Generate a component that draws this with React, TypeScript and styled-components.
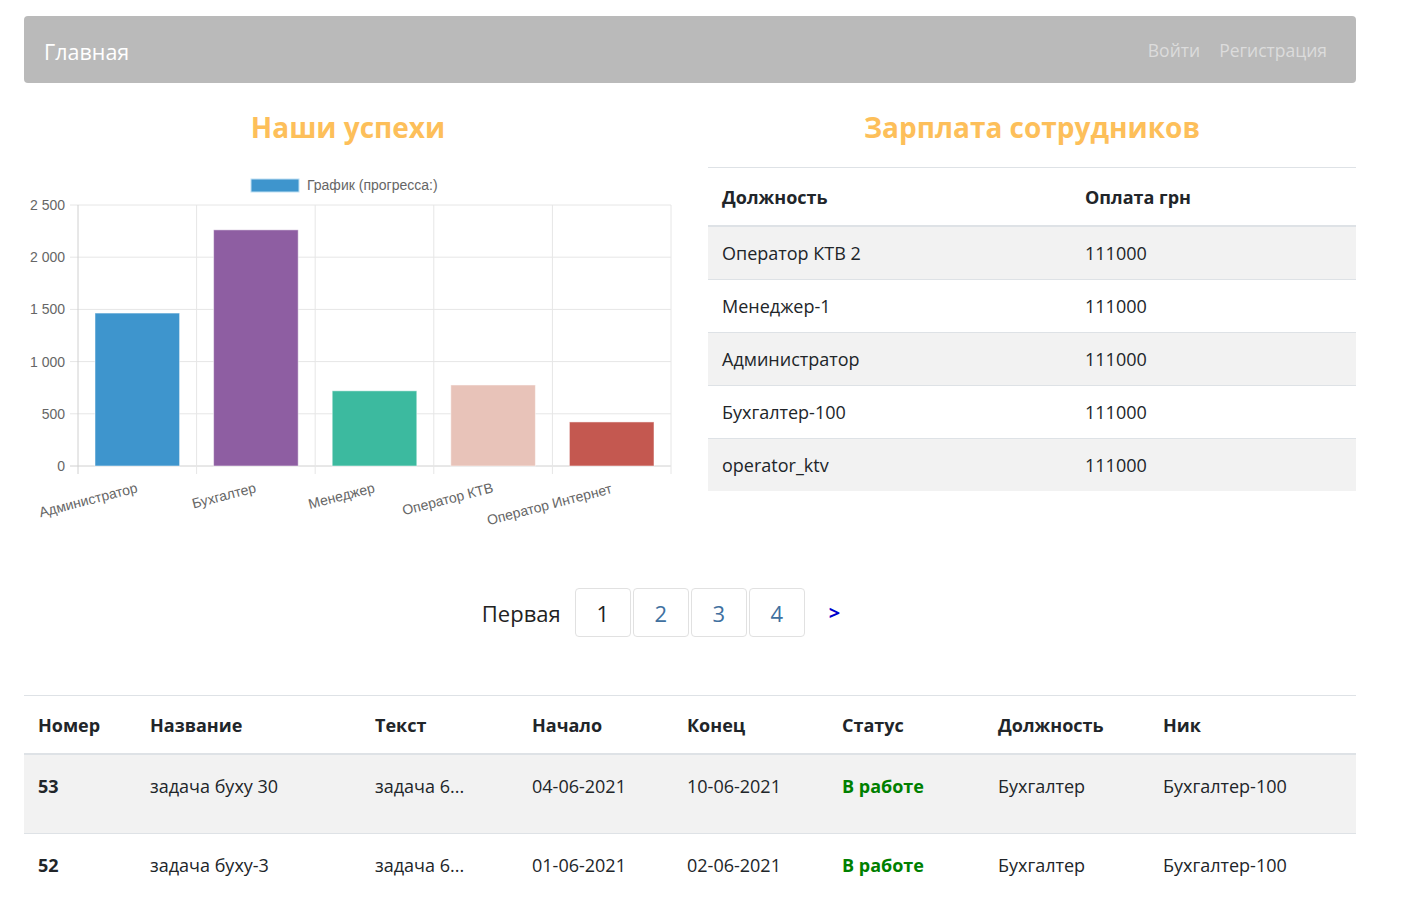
import React from "react";
import styled, { createGlobalStyle } from "styled-components";

const Global = createGlobalStyle`
  html, body { margin: 0; padding: 0; background: #fff; }
  body { font-family: "Open Sans", "Noto Sans", sans-serif; color: #212529; }
  * { box-sizing: border-box; }
`;

const Page = styled.div`
  width: 1332px;
  margin: 16px 0 0 24px;
`;

const Navbar = styled.nav`
  height: 67px;
  background: #bababa;
  border-radius: 4px;
  display: flex;
  align-items: center;
  justify-content: space-between;
  padding: 0 29px 0 20px;
`;

const Brand = styled.a`
  color: #fff;
  font-size: 21.5px;
  line-height: 30px;
  text-decoration: none;
  margin-top: 4px;
`;

const NavLinks = styled.div`
  display: flex;
  gap: 19px;
`;

const NavLink = styled.a`
  color: #dcdcdc;
  font-size: 17.5px;
  text-decoration: none;
`;

const TopGrid = styled.div`
  display: grid;
  grid-template-columns: 648px 648px;
  column-gap: 36px;
  margin-top: 24px;
`;

const Column = styled.section`
  display: flex;
  flex-direction: column;
`;

const Heading = styled.h2`
  margin: 0;
  text-align: center;
  font-size: 28px;
  line-height: 40px;
  font-weight: 700;
  color: #fdbf5a;
`;

const ChartBox = styled.div`
  margin-top: 23px;
  height: 360px;
`;

const SalaryTable = styled.table`
  margin-top: 20px;
  width: 100%;
  border-collapse: collapse;
  font-size: 18px;
  border-top: 1px solid #dee2e6;
`;

const Th = styled.th<{ $w?: number }>`
  text-align: left;
  font-weight: 700;
  padding: 16px 14px 14px;
  line-height: 27px;
  border-bottom: 2px solid #dee2e6;
  ${(p) => (p.$w ? `width: ${p.$w}px;` : "")}
`;

const Tr = styled.tr<{ $striped?: boolean; $h?: number }>`
  background: ${(p) => (p.$striped ? "#f2f2f2" : "#fff")};
  ${(p) => (p.$h ? `height: ${p.$h}px;` : "")}
`;

const Td = styled.td<{ $bold?: boolean; $green?: boolean; $top?: boolean }>`
  padding: ${(p) => (p.$top ? "17px 14px 12px" : "12px 14px")};
  vertical-align: ${(p) => (p.$top ? "top" : "middle")};
  line-height: 28px;
  border-top: 1px solid #dee2e6;
  font-weight: ${(p) => (p.$bold || p.$green ? 700 : 400)};
  color: ${(p) => (p.$green ? "#008000" : "#212529")};
  white-space: nowrap;
`;

const Pager = styled.div`
  display: flex;
  align-items: center;
  justify-content: center;
  margin-top: 58px;
  margin-left: -58px;
  font-size: 22px;
`;

const PagerLabel = styled.span`
  color: #222;
  margin-right: 14px;
`;

const PageBox = styled.a<{ $active?: boolean }>`
  width: 56px;
  height: 49px;
  margin-right: 2px;
  display: flex;
  align-items: center;
  justify-content: center;
  border: 1px solid #e1e1e1;
  border-radius: 4px;
  color: ${(p) => (p.$active ? "#222" : "#40709f")};
  text-decoration: none;
`;

const Next = styled.a`
  color: #0000cc;
  font-weight: 700;
  font-size: 20px;
  margin-left: 22px;
  text-decoration: none;
`;

const TaskTable = styled.table`
  margin-top: 58px;
  width: 100%;
  border-collapse: collapse;
  font-size: 18px;
  border-top: 1px solid #dee2e6;
  table-layout: fixed;
`;

type Bar = { label: string; value: number; color: string };

const bars: Bar[] = [
  { label: "Администратор", value: 1465, color: "#3e95cd" },
  { label: "Бухгалтер", value: 2262, color: "#8e5ea2" },
  { label: "Менеджер", value: 720, color: "#3cba9f" },
  { label: "Оператор КТВ", value: 776, color: "#e8c3b9" },
  { label: "Оператор Интернет", value: 422, color: "#c45850" },
];

function Chart() {
  const left = 54;
  const right = 647;
  const top = 35;
  const bottom = 296;
  const step = (right - left) / bars.length;
  const yOf = (v: number) => bottom - (v / 2500) * (bottom - top);
  const ticks = [0, 500, 1000, 1500, 2000, 2500];
  const fmt = (n: number) => (n >= 1000 ? `${Math.floor(n / 1000)} ${String(n % 1000).padStart(3, "0")}` : String(n));
  return (
    <svg width="648" height="360" viewBox="0 0 648 360" fontFamily="'Liberation Sans', Arial, sans-serif">
      <rect x="227" y="9" width="48" height="13" fill="#3e95cd" stroke="#bfe0f3" strokeWidth="1" />
      <text x="283" y="20" fontSize="14" fill="#666">График (прогресса:)</text>
      {ticks.map((t) => (
        <g key={t}>
          <line x1={left - 8} x2={right} y1={yOf(t)} y2={yOf(t)} stroke={t === 0 ? "#d0d0d0" : "#e6e6e6"} strokeWidth="1" />
          <text x={left - 13} y={yOf(t) + 5} fontSize="14" fill="#666" textAnchor="end">{fmt(t)}</text>
        </g>
      ))}
      {Array.from({ length: bars.length + 1 }).map((_, i) => (
        <line key={i} x1={left + i * step} x2={left + i * step} y1={top} y2={bottom + 8} stroke={i === 0 ? "#d0d0d0" : "#e6e6e6"} strokeWidth="1" />
      ))}
      {bars.map((b, i) => {
        const x0 = left + i * step + 17;
        const w = step - 34;
        const y = yOf(b.value);
        const cx = left + i * step + step / 2;
        const ly = i === 4 ? 323 : 322;
        return (
          <g key={b.label}>
            <rect x={x0} y={y} width={w} height={bottom - y} fill={b.color} stroke="rgba(255,255,255,0.5)" strokeWidth="1" />
            <text x={cx + 1} y={ly} fontSize="14" fill="#666" textAnchor="end" transform={`rotate(-14.5 ${cx + 1} ${ly})`}>{b.label}</text>
          </g>
        );
      })}
    </svg>
  );
}

const salaries = [
  ["Оператор КТВ 2", "111000"],
  ["Менеджер-1", "111000"],
  ["Администратор", "111000"],
  ["Бухгалтер-100", "111000"],
  ["operator_ktv", "111000"],
];

const taskCols = [
  { name: "Номер", w: 112 },
  { name: "Название", w: 225 },
  { name: "Текст", w: 157 },
  { name: "Начало", w: 155 },
  { name: "Конец", w: 155 },
  { name: "Статус", w: 156 },
  { name: "Должность", w: 165 },
  { name: "Ник", w: 207 },
];

const tasks = [
  ["53", "задача буху 30", "задача 6...", "04-06-2021", "10-06-2021", "В работе", "Бухгалтер", "Бухгалтер-100"],
  ["52", "задача буху-3", "задача 6...", "01-06-2021", "02-06-2021", "В работе", "Бухгалтер", "Бухгалтер-100"],
];

export default function App() {
  return (
    <>
      <Global />
      <Page>
        <Navbar>
          <Brand href="#">Главная</Brand>
          <NavLinks>
            <NavLink href="#">Войти</NavLink>
            <NavLink href="#">Регистрация</NavLink>
          </NavLinks>
        </Navbar>
        <TopGrid>
          <Column>
            <Heading>Наши успехи</Heading>
            <ChartBox>
              <Chart />
            </ChartBox>
          </Column>
          <Column>
            <Heading>Зарплата сотрудников</Heading>
            <SalaryTable>
              <thead>
                <tr>
                  <Th $w={363}>Должность</Th>
                  <Th>Оплата грн</Th>
                </tr>
              </thead>
              <tbody>
                {salaries.map((r, i) => (
                  <Tr key={r[0]} $striped={i % 2 === 0}>
                    <Td>{r[0]}</Td>
                    <Td>{r[1]}</Td>
                  </Tr>
                ))}
              </tbody>
            </SalaryTable>
          </Column>
        </TopGrid>
        <Pager>
          <PagerLabel>Первая</PagerLabel>
          <PageBox href="#" $active>1</PageBox>
          <PageBox href="#">2</PageBox>
          <PageBox href="#">3</PageBox>
          <PageBox href="#">4</PageBox>
          <Next href="#">&gt;</Next>
        </Pager>
        <TaskTable>
          <thead>
            <tr>
              {taskCols.map((c) => (
                <Th key={c.name} $w={c.w}>{c.name}</Th>
              ))}
            </tr>
          </thead>
          <tbody>
            {tasks.map((r, i) => (
              <Tr key={r[0]} $striped={i % 2 === 0} $h={79}>
                {r.map((c, j) => (
                  <Td key={j} $top $bold={j === 0} $green={j === 5}>{c}</Td>
                ))}
              </Tr>
            ))}
          </tbody>
        </TaskTable>
      </Page>
    </>
  );
}
